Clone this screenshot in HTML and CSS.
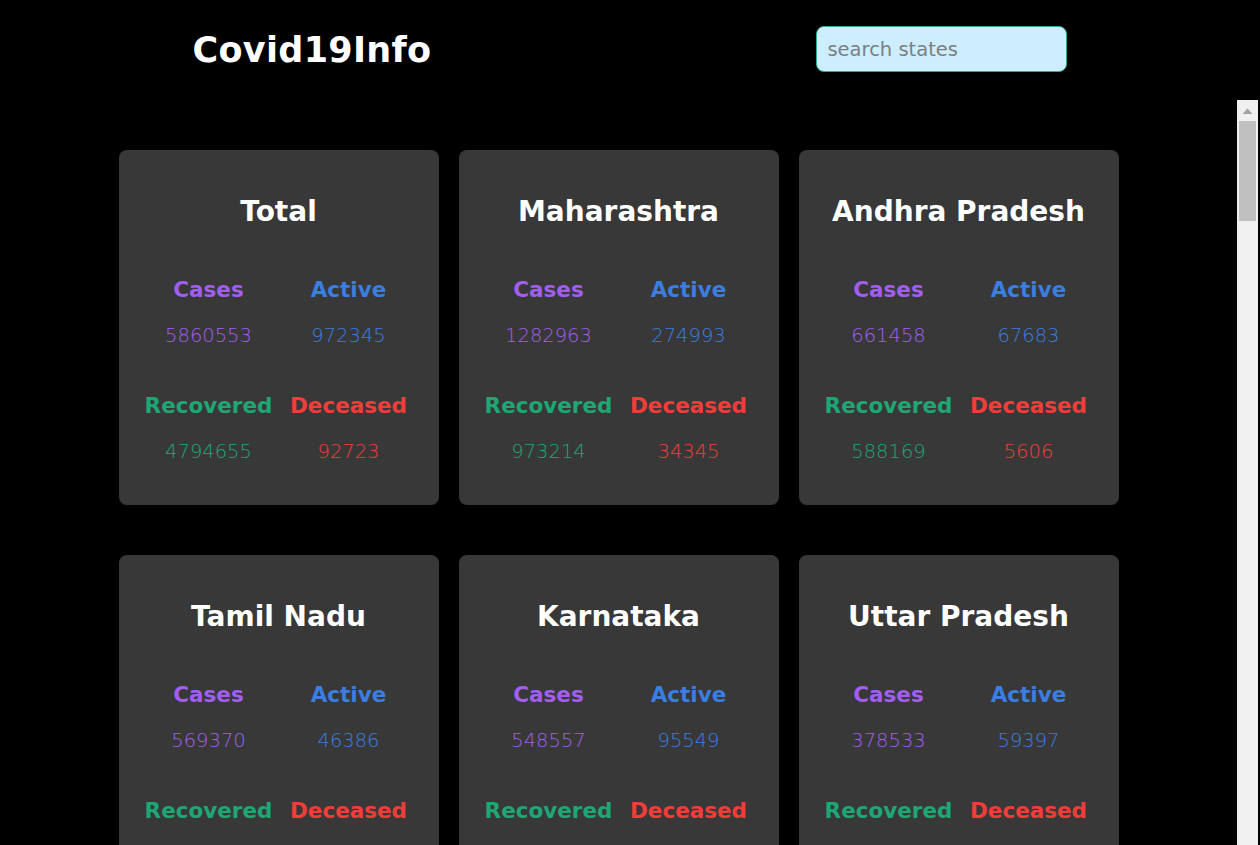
FILE: index.html
```html
<!DOCTYPE html>
<html lang="en">
<head>
<meta charset="utf-8">
<title>Covid19Info</title>
<link rel="stylesheet" href="styles.css">
</head>
<body>
<div class="app">
  <header class="header">
    <h1 class="logo">Covid19Info</h1>
    <input class="search" type="text" placeholder="search states">
  </header>
  <div class="body-area">
  <main class="scroller">
    <div class="grid">
      <div class="card"><h2 class="card-title">Total</h2><div class="stats"><div class="stat cases"><span class="label">Cases</span><span class="num">5860553</span></div><div class="stat active"><span class="label">Active</span><span class="num">972345</span></div><div class="stat recovered"><span class="label">Recovered</span><span class="num">4794655</span></div><div class="stat deceased"><span class="label">Deceased</span><span class="num">92723</span></div></div></div>
      <div class="card"><h2 class="card-title">Maharashtra</h2><div class="stats"><div class="stat cases"><span class="label">Cases</span><span class="num">1282963</span></div><div class="stat active"><span class="label">Active</span><span class="num">274993</span></div><div class="stat recovered"><span class="label">Recovered</span><span class="num">973214</span></div><div class="stat deceased"><span class="label">Deceased</span><span class="num">34345</span></div></div></div>
      <div class="card"><h2 class="card-title">Andhra Pradesh</h2><div class="stats"><div class="stat cases"><span class="label">Cases</span><span class="num">661458</span></div><div class="stat active"><span class="label">Active</span><span class="num">67683</span></div><div class="stat recovered"><span class="label">Recovered</span><span class="num">588169</span></div><div class="stat deceased"><span class="label">Deceased</span><span class="num">5606</span></div></div></div>
      <div class="card"><h2 class="card-title">Tamil Nadu</h2><div class="stats"><div class="stat cases"><span class="label">Cases</span><span class="num">569370</span></div><div class="stat active"><span class="label">Active</span><span class="num">46386</span></div><div class="stat recovered"><span class="label">Recovered</span><span class="num">513836</span></div><div class="stat deceased"><span class="label">Deceased</span><span class="num">9148</span></div></div></div>
      <div class="card"><h2 class="card-title">Karnataka</h2><div class="stats"><div class="stat cases"><span class="label">Cases</span><span class="num">548557</span></div><div class="stat active"><span class="label">Active</span><span class="num">95549</span></div><div class="stat recovered"><span class="label">Recovered</span><span class="num">444658</span></div><div class="stat deceased"><span class="label">Deceased</span><span class="num">8331</span></div></div></div>
      <div class="card"><h2 class="card-title">Uttar Pradesh</h2><div class="stats"><div class="stat cases"><span class="label">Cases</span><span class="num">378533</span></div><div class="stat active"><span class="label">Active</span><span class="num">59397</span></div><div class="stat recovered"><span class="label">Recovered</span><span class="num">313703</span></div><div class="stat deceased"><span class="label">Deceased</span><span class="num">5433</span></div></div></div>
      <div class="card"><h2 class="card-title">Delhi</h2><div class="stats"><div class="stat cases"><span class="label">Cases</span><span class="num">260623</span></div><div class="stat active"><span class="label">Active</span><span class="num">30836</span></div><div class="stat recovered"><span class="label">Recovered</span><span class="num">224375</span></div><div class="stat deceased"><span class="label">Deceased</span><span class="num">5123</span></div></div></div>
      <div class="card"><h2 class="card-title">West Bengal</h2><div class="stats"><div class="stat cases"><span class="label">Cases</span><span class="num">237869</span></div><div class="stat active"><span class="label">Active</span><span class="num">24552</span></div><div class="stat recovered"><span class="label">Recovered</span><span class="num">208713</span></div><div class="stat deceased"><span class="label">Deceased</span><span class="num">4604</span></div></div></div>
      <div class="card"><h2 class="card-title">Odisha</h2><div class="stats"><div class="stat cases"><span class="label">Cases</span><span class="num">196888</span></div><div class="stat active"><span class="label">Active</span><span class="num">33023</span></div><div class="stat recovered"><span class="label">Recovered</span><span class="num">163102</span></div><div class="stat deceased"><span class="label">Deceased</span><span class="num">763</span></div></div></div>
    </div>
  </main>
  <div class="fake-scrollbar" aria-hidden="true">
    <div class="sb-btn">
      <svg width="21" height="21" viewBox="0 0 21 21"><path d="M5.5 14 L10.5 8.5 L15.5 14 Z" fill="#a3a3a3"/></svg>
    </div>
    <div class="sb-track"><div class="sb-thumb"></div></div>
  </div>
  </div>
</div>
</body>
</html>
```

FILE: styles.css
```css
* {
  box-sizing: border-box;
}

html, body {
  margin: 0;
  padding: 0;
  height: 100%;
  background: #000;
  overflow: hidden;
}

body {
  font-family: "DejaVu Sans", "Liberation Sans", sans-serif;
  color: #fff;
}

.app {
  display: flex;
  flex-direction: column;
  height: 845px;
}

.header {
  flex: 0 0 100px;
  display: flex;
  align-items: center;
  justify-content: space-around;
  background: #000;
}

.logo {
  margin: 0;
  font-size: 35px;
  font-weight: 700;
  line-height: 40px;
  letter-spacing: 0.3px;
  color: #fff;
}

.search {
  width: 251px;
  height: 46px;
  margin-top: -2px;
  padding: 0 10px;
  border: 1px solid #2ab089;
  border-radius: 8px;
  background: #cdeeff;
  font-family: "DejaVu Sans", "Liberation Sans", sans-serif;
  font-size: 19.5px;
  color: #333;
  outline: none;
}

.search::placeholder {
  color: #7b7f82;
}

.body-area {
  flex: 1 1 auto;
  display: flex;
  min-height: 0;
  padding-right: 2px;
}

.scroller {
  flex: 1 1 auto;
  overflow: hidden;
  scrollbar-width: none;
}

.fake-scrollbar {
  flex: 0 0 21px;
  display: flex;
  flex-direction: column;
  background: #f0f0f0;
}

.sb-btn {
  flex: 0 0 21px;
  display: flex;
}

.sb-track {
  flex: 1 1 auto;
  padding: 0 2px;
}

.sb-thumb {
  height: 100px;
  background: #c0c0c0;
}

.grid {
  display: grid;
  grid-template-columns: repeat(3, 320px);
  justify-content: center;
  column-gap: 20px;
  row-gap: 50px;
  padding: 50px 0 50px;
}

.card {
  background: #383838;
  border-radius: 8px;
  padding: 41px 20px 38px;
  min-height: 355px;
}

.card-title {
  margin: 0;
  text-align: center;
  font-size: 28px;
  font-weight: 700;
  line-height: 42px;
  color: #fff;
}

.stats {
  display: grid;
  grid-template-columns: 1fr 1fr;
  row-gap: 40px;
  margin-top: 42px;
}

.stat {
  display: flex;
  flex-direction: column;
  align-items: center;
  gap: 16px;
}

.label {
  font-size: 21.5px;
  font-weight: 700;
  line-height: 30px;
  white-space: nowrap;
}

.num {
  font-size: 19.5px;
  font-weight: 300;
  line-height: 30px;
}

.cases { color: #a25ef0; }
.active { color: #3a7ee0; }
.recovered { color: #1ea774; }
.deceased { color: #f23d38; }
```
